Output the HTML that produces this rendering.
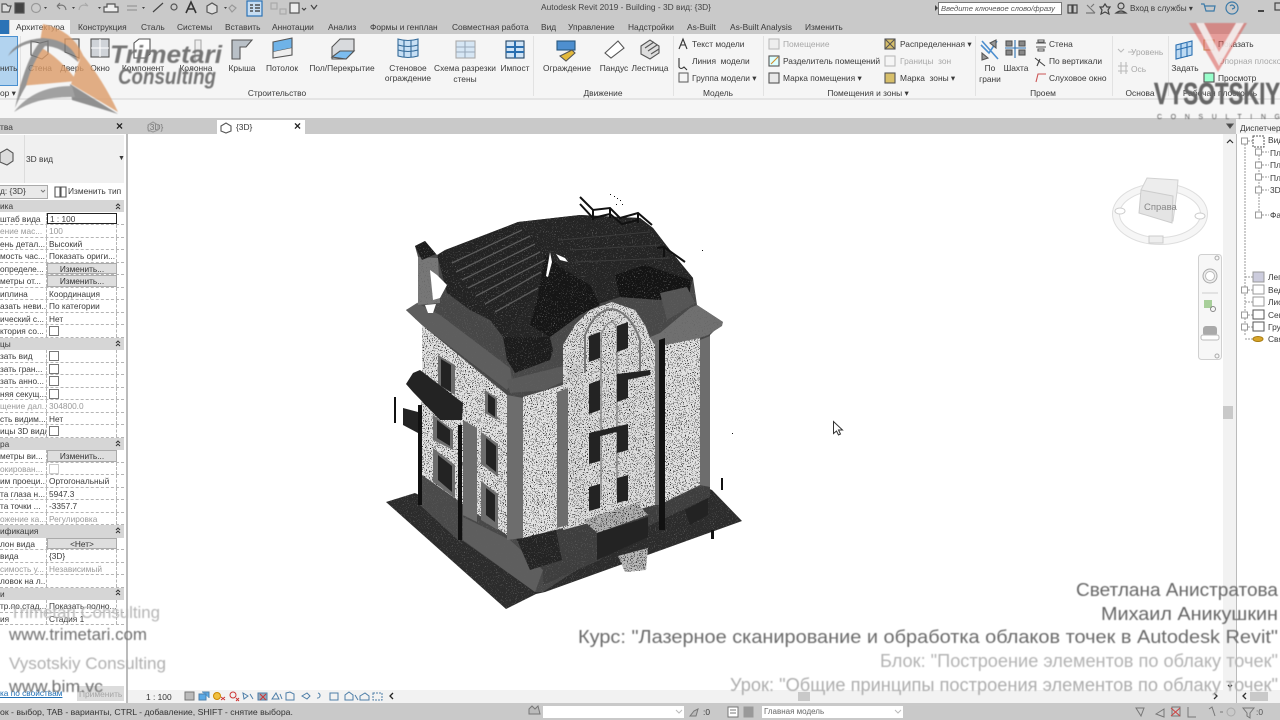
<!DOCTYPE html>
<html lang="ru"><head><meta charset="utf-8"><title>Autodesk Revit 2019</title>
<style>
html,body{margin:0;padding:0;width:1280px;height:720px;overflow:hidden;background:#fff}
body{font-family:"Liberation Sans","Noto Sans CJK SC",sans-serif;position:relative;color:#3a3a3a}
#ui{position:absolute;left:0;top:0;width:1280px;height:720px;overflow:hidden;filter:blur(.3px)}
.b{position:absolute}
.t{position:absolute;white-space:nowrap;font-size:8.4px;line-height:10px}
.c{transform:translateX(-50%)}
.g{color:#a8a8a8}
#props{position:absolute;left:0;top:212.5px;width:124px}
.r{height:12.5px;display:flex;font-size:8.3px;line-height:12px;box-sizing:border-box;border-bottom:1px dashed #b5b5b5;white-space:nowrap}
.r i{font-style:normal;width:46px;overflow:hidden;border-right:1px dashed #b5b5b5;flex:none}
.r u{text-decoration:none;padding-left:2px;width:70px;box-sizing:border-box;overflow:hidden;border-right:1px dashed #b5b5b5;flex:none}
.r.h{background:#d6d6d6;border:0}
.btn u{background:#dedede;border:1px solid #aaa;text-align:center;line-height:10px;color:#333;padding:0}
.cb{display:inline-block;width:8px;height:8px;border:1px solid #777;background:#fff;margin-top:1px}
.gr{color:#9a9a9a}
svg{position:absolute;left:0;top:0}
</style></head><body>
<div id="ui">
<div class="b" style="left:0;top:0;width:1280px;height:34px;background:#c9c9c9"></div>
<div class="b" style="left:0;top:34px;width:1280px;height:66px;background:#f5f5f5"></div>
<div class="b" style="left:0;top:98px;width:1280px;height:2px;background:#e4e4e4"></div>
<div class="b" style="left:0;top:100px;width:1280px;height:18px;background:#f6f6f6"></div>
<div class="b" style="left:0;top:118px;width:1280px;height:16px;background:#c9c9c9"></div>
<div class="b" style="left:0;top:20px;width:9px;height:14px;background:#2b73b6"></div>
<div class="b" style="left:10px;top:20px;width:60px;height:14px;background:#f5f5f5"></div>
<div class="t" style="left:541px;top:2px;color:#444">Autodesk Revit 2019 - Building - 3D вид: {3D}</div>
<div class="t" style="left:16px;top:22px">Архитектура</div><div class="t" style="left:78px;top:22px">Конструкция</div><div class="t" style="left:141px;top:22px">Сталь</div><div class="t" style="left:177px;top:22px">Системы</div><div class="t" style="left:225px;top:22px">Вставить</div><div class="t" style="left:272px;top:22px">Аннотации</div><div class="t" style="left:328px;top:22px">Анализ</div><div class="t" style="left:370px;top:22px">Формы и генплан</div><div class="t" style="left:452px;top:22px">Совместная работа</div><div class="t" style="left:541px;top:22px">Вид</div><div class="t" style="left:568px;top:22px">Управление</div><div class="t" style="left:628px;top:22px">Надстройки</div><div class="t" style="left:687px;top:22px">As-Built</div><div class="t" style="left:730px;top:22px">As-Built Analysis</div><div class="t" style="left:805px;top:22px">Изменить</div>

<div class="b" style="left:938px;top:2px;width:124px;height:13px;background:#fff;border:1px solid #777;box-sizing:border-box"></div>
<div class="t" style="left:941px;top:4px;font-size:7.6px;font-style:italic;color:#555">Введите ключевое слово/фразу</div>
<div class="t" style="left:1130px;top:4px;font-size:8.2px">Вход в службы ▾</div>

<div class="b" style="left:0;top:36px;width:18px;height:50px;background:#b2d3ef;border:1px solid #4a90d0;border-left:0;box-sizing:border-box"></div>
<div class="t" style="left:0;top:63px">нить</div><div class="t" style="left:0;top:88px">ор ▾</div>
<div class="t c" style="left:40px;top:63px">Стена</div><div class="t c" style="left:72px;top:63px">Дверь</div><div class="t c" style="left:100px;top:63px">Окно</div><div class="t c" style="left:143px;top:63px">Компонент</div><div class="t c" style="left:196px;top:63px">Колонна</div><div class="t c" style="left:242px;top:63px">Крыша</div><div class="t c" style="left:282px;top:63px">Потолок</div><div class="t c" style="left:342px;top:63px">Пол/Перекрытие</div><div class="t c" style="left:408px;top:63px">Стеновое</div><div class="t c" style="left:408px;top:73px">ограждение</div><div class="t c" style="left:465px;top:63px">Схема разрезки</div><div class="t c" style="left:465px;top:74px">стены</div><div class="t c" style="left:515px;top:63px">Импост</div><div class="t c" style="left:567px;top:63px">Ограждение</div><div class="t c" style="left:614px;top:63px">Пандус</div><div class="t c" style="left:650px;top:63px">Лестница</div>
<div class="t c" style="left:277px;top:88px">Строительство</div><div class="t c" style="left:603px;top:88px">Движение</div><div class="t c" style="left:718px;top:88px">Модель</div><div class="t c" style="left:868px;top:88px">Помещения и зоны ▾</div><div class="t c" style="left:1043px;top:88px">Проем</div><div class="t c" style="left:1140px;top:88px">Основа</div><div class="t c" style="left:1220px;top:88px">Рабочая плоскость</div>
<div class="t" style="left:692px;top:39px">Текст модели</div><div class="t" style="left:692px;top:56px">Линия&nbsp; модели</div><div class="t" style="left:692px;top:73px">Группа модели ▾</div>
<div class="t g" style="left:783px;top:39px">Помещение</div><div class="t" style="left:783px;top:56px">Разделитель помещений</div><div class="t" style="left:783px;top:73px">Марка помещения ▾</div>
<div class="t" style="left:900px;top:39px">Распределенная ▾</div><div class="t g" style="left:900px;top:56px">Границы&nbsp; зон</div><div class="t" style="left:900px;top:73px">Марка&nbsp; зоны ▾</div>
<div class="t c" style="left:990px;top:63px">По</div><div class="t c" style="left:990px;top:74px">грани</div><div class="t c" style="left:1016px;top:63px">Шахта</div>
<div class="t" style="left:1049px;top:39px">Стена</div><div class="t" style="left:1049px;top:56px">По вертикали</div><div class="t" style="left:1049px;top:73px">Слуховое окно</div>
<div class="t g" style="left:1131px;top:47px">Уровень</div><div class="t g" style="left:1131px;top:64px">Ось</div><div class="t c" style="left:1185px;top:63px">Задать</div>
<div class="t" style="left:1218px;top:39px">Показать</div><div class="t g" style="left:1218px;top:56px">Опорная плоскость</div><div class="t" style="left:1218px;top:73px">Просмотр</div>

<div class="b" style="left:128px;top:134px;width:1095px;height:556px;background:#fff"></div>
<div class="b" style="left:0;top:134px;width:127px;height:569px;background:#fff"></div>
<div class="b" style="left:126px;top:134px;width:2px;height:569px;background:#bbb"></div>
<div class="t" style="left:0;top:122px">тва</div><div class="t" style="left:116px;top:121px;font-size:12px;color:#222;font-weight:bold">×</div>
<div class="b" style="left:217px;top:120px;width:88px;height:14px;background:#fff"></div>
<div class="t" style="left:147px;top:122px;color:#777">{3D}</div><div class="t" style="left:236px;top:122px">{3D}</div><div class="t" style="left:294px;top:121px;font-size:12px;font-weight:bold;color:#222">×</div>
<div class="b" style="left:1236px;top:119px;width:44px;height:15px;background:#f5f5f5"></div>
<div class="t" style="left:1240px;top:123px;font-size:8.3px">Диспетчер</div>

<div class="b" style="left:0;top:135px;width:124px;height:48px;background:#f0f0f0"></div>
<div class="b" style="left:24px;top:135px;width:1px;height:48px;background:#dcdcdc"></div>
<div class="t" style="left:26px;top:154px">3D вид</div><div class="t" style="left:118px;top:154px;font-size:7px">▼</div>
<div class="b" style="left:0;top:185px;width:48px;height:14px;background:#e9e9e9;border:1px solid #aaa;border-left:0;box-sizing:border-box"></div>
<div class="t" style="left:0;top:186px">д: {3D}</div><div class="t" style="left:68px;top:186px">Изменить тип</div>

<div id="props">
<div class="r h" style="position:absolute;top:-12.5px;width:124px;height:12px;line-height:12px">ика</div>
<div class="r"><i>штаб вида</i><u style="border:1px solid #222;line-height:10px">1 : 100</u></div>
<div class="r"><i class="gr">ение мас...</i><u class="gr">100</u></div>
<div class="r"><i>ень детал...</i><u>Высокий</u></div>
<div class="r"><i>мость час...</i><u>Показать ориги...</u></div>
<div class="r btn"><i>определе...</i><u>Изменить...</u></div>
<div class="r btn"><i>метры от...</i><u>Изменить...</u></div>
<div class="r"><i>иплина</i><u>Координация</u></div>
<div class="r"><i>азать неви...</i><u>По категории</u></div>
<div class="r"><i>ический с...</i><u>Нет</u></div>
<div class="r"><i>ктория со...</i><u><span class="cb"></span></u></div>
<div class="r h">цы</div>
<div class="r"><i>зать вид</i><u><span class="cb"></span></u></div>
<div class="r"><i>зать гран...</i><u><span class="cb"></span></u></div>
<div class="r"><i>зать анно...</i><u><span class="cb"></span></u></div>
<div class="r"><i>няя секущ...</i><u><span class="cb"></span></u></div>
<div class="r"><i class="gr">щение дал...</i><u class="gr">304800.0</u></div>
<div class="r"><i>сть видим...</i><u>Нет</u></div>
<div class="r"><i>ицы 3D вида</i><u><span class="cb"></span></u></div>
<div class="r h">ра</div>
<div class="r btn"><i>метры ви...</i><u>Изменить...</u></div>
<div class="r"><i class="gr">окирован...</i><u><span class="cb" style="border-color:#ccc"></span></u></div>
<div class="r"><i>им проеци...</i><u>Ортогональный</u></div>
<div class="r"><i>та глаза н...</i><u>5947.3</u></div>
<div class="r"><i>та точки ...</i><u>-3357.7</u></div>
<div class="r"><i class="gr">ожение ка...</i><u class="gr">Регулировка</u></div>
<div class="r h">ификация</div>
<div class="r btn"><i>лон вида</i><u>&lt;Нет&gt;</u></div>
<div class="r"><i>вида</i><u>{3D}</u></div>
<div class="r"><i class="gr">симость у...</i><u class="gr">Независимый</u></div>
<div class="r"><i>ловок на л...</i><u></u></div>
<div class="r h">и</div>
<div class="r"><i>тр.по.стад...</i><u>Показать полно...</u></div>
<div class="r"><i>ия</i><u>Стадия 1</u></div>
</div>

<div class="t" style="left:0;top:688px;font-size:8.3px;color:#1f6fb5;text-decoration:underline">ка по свойствам</div>
<div class="b" style="left:77px;top:686px;width:47px;height:15px;background:#dcdcdc"></div><div class="t" style="left:79px;top:689px;color:#a5a5a5">Применить</div>

<div class="b" style="left:128px;top:690px;width:1095px;height:13px;background:#f2f2f2"></div>
<div class="t" style="left:146px;top:692px;color:#333">1 : 100</div>
<div class="b" style="left:798px;top:692px;width:12px;height:9px;background:#c9c9c9"></div>
<div class="b" style="left:1223px;top:134px;width:13px;height:569px;background:#f2f2f2"></div>
<div class="b" style="left:1223px;top:406px;width:10px;height:13px;background:#c9c9c9"></div>
<div class="b" style="left:1236px;top:134px;width:1px;height:569px;background:#bbb"></div>
<div class="b" style="left:1237px;top:690px;width:43px;height:13px;background:#f2f2f2"></div>
<div class="b" style="left:1250px;top:692px;width:18px;height:9px;background:#c9c9c9"></div>

<div class="b" style="left:0;top:703px;width:1280px;height:17px;background:#c9c9c9"></div>
<div class="t" style="left:0;top:707px;font-size:8.7px;color:#333">ок - выбор, TAB - варианты, CTRL - добавление, SHIFT - снятие выбора.</div>
<div class="b" style="left:543px;top:706px;width:141px;height:12px;background:#fff"></div>
<div class="b" style="left:762px;top:706px;width:141px;height:12px;background:#fff"></div>
<div class="t" style="left:764px;top:707px;font-size:8px;color:#666">Главная модель</div>
<div class="t" style="left:703px;top:707px">:0</div>
<div class="t" style="left:1256px;top:707px;color:#555">:0</div>

<div class="t" style="left:1268px;top:135px">Вид</div>
<div class="t" style="left:1270px;top:148px">Пл</div><div class="t" style="left:1270px;top:160px">Пл</div><div class="t" style="left:1270px;top:173px">Пл</div><div class="t" style="left:1270px;top:185px">3D</div><div class="t" style="left:1270px;top:210px">Фа</div>
<div class="t" style="left:1268px;top:272px">Лег</div><div class="t" style="left:1268px;top:285px">Вед</div><div class="t" style="left:1268px;top:297px">Лис</div><div class="t" style="left:1268px;top:310px">Сем</div><div class="t" style="left:1268px;top:322px">Гру</div><div class="t" style="left:1268px;top:334px">Свя</div>

<svg width="1280" height="720" viewBox="0 0 1280 720" fill="none">
<g stroke="#e2e2e2"><path d="M20.5 36V96M533.5 36V96M673.5 36V96M763.5 36V96M975.5 36V96M1112.5 36V96M1168.5 36V96"/></g>
<!-- section chevrons -->
<g stroke="#333"><path d="M116 206l2-2 2 2M116 209l2-2 2 2M116 343l2-2 2 2M116 346l2-2 2 2M116 443l2-2 2 2M116 446l2-2 2 2M116 530l2-2 2 2M116 533l2-2 2 2M116 592l2-2 2 2M116 595l2-2 2 2"/><path d="M41 190l2 2 2-2" stroke="#777"/></g>
<!-- QAT icons -->
<g stroke="#555" stroke-width="1.2">
<path d="M2 4h4l2 2h3l-2 6H2z" fill="#ddd"/><rect x="15" y="3" width="9" height="10" fill="#444"/><circle cx="36" cy="8" r="4.5" stroke="#999" fill="#ccc"/>
<path d="M57 6q8-3 9 4M57 6l3-3M57 6l3 3" stroke="#777"/><path d="M88 6q-8-3-9 4M88 6l-3-3" stroke="#aaa"/>
<path d="M107 4h8v3h3v5h-14v-5h3z" fill="#eee"/><path d="M127 6h10M127 10h10" stroke="#999"/><path d="M153 12l10-9" stroke="#444"/><circle cx="174" cy="7" r="3"/>
<path d="M186 13l5-11 5 11M188 9h6" stroke="#333" stroke-width="1.6"/><path d="M207 6l5-3 5 3v6l-5 2-5-2z" fill="#ddd"/><path d="M232 5l4 3-4 4-3-4z" stroke="#999"/>
<rect x="247" y="1" width="15" height="15" fill="#c7ddf2" stroke="#2b73b6"/><path d="M250 5h3M250 8h3M250 11h3M255 5h5M255 8h5M255 11h5" stroke="#333"/>
<rect x="271" y="3" width="6" height="6" stroke="#aaa"/><rect x="280" y="9" width="6" height="5" stroke="#aaa"/><rect x="290" y="3" width="9" height="10" fill="#eee"/><path d="M302 8l2 2 2-2M311 5l3 4 3-4" stroke="#444"/>
</g>
<g fill="#444"><path d="M44 7h3l-1.500 2zM72 7h3l-1.500 2zM98 7h3l-1.500 2zM142 7h3l-1.500 2zM224 7h3l-1.500 2z"/></g>
<g stroke="#444" stroke-width="1.2"><path d="M1068 5h4v8h-4zM1073 5h4v8h-4z"/><path d="M1087 5l8 8M1094 4l-3 3M1086 13h9" stroke="#777"/><path d="M1105 4l2 3h3l-2 3 1 4-4-2-4 2 1-4-2-3h3z"/><circle cx="1121" cy="6" r="3"/><path d="M1116 13q5-4 10 0z"/><path d="M1201 4h3l2 7h8l1-5h-10" stroke="#3b7aa8"/><circle cx="1232" cy="8" r="6" stroke="#3b7aa8"/><path d="M1230 6q2-2 4 0t-2 3" stroke="#3b7aa8"/><path d="M1258 11h6" stroke-width="2"/><rect x="1275" y="3" width="6" height="7"/></g>
<path d="M935 5l3 3-3 3z" fill="#444"/>
<!-- ribbon icons big -->
<g stroke="#555" stroke-width="1.1">
<path d="M31 41l9 2 8-2v13l-6 5-11-4z" fill="#f0f0f0"/><path d="M65 39h14v19l-9-4-5-2z" fill="#e4e4e4" stroke="#444"/>
<rect x="91" y="39" width="18" height="18" fill="#cfd3d8"/><path d="M100 39v18M91 48h18" stroke="#fff"/>
<path d="M134 43l5-4h11v15l-5 4h-11z" fill="#fff"/><path d="M195 40h6v20h-6z" fill="#eee" stroke="#aaa"/>
<path d="M232 40h20l-6 7h-6v12h-8z" fill="#b9c0c7"/><path d="M273 42l19-4v10l-19 4z" fill="#6fb3e8"/><path d="M273 52v6l19-3v-7" fill="#eee"/>
<path d="M332 47l8-8h14v12l-8 8h-14z" fill="#d8dadd"/><path d="M332 57l8-6h14l-8 8z" fill="#7cbdf0"/>
<path d="M398 39q10 3 20 0v17q-10 3-20 0z" fill="#c7dff4" stroke="#336a99"/><path d="M398 45q10 3 20 0M398 50q10 3 20 0M404 40v17M411 40v17" stroke="#336a99"/>
<rect x="456" y="41" width="19" height="17" fill="#d6e6f4" stroke="#aaa"/><path d="M456 47h19M456 52h19M465 41v17" stroke="#9ab"/>
<rect x="506" y="41" width="18" height="17" fill="#cfe4f7" stroke="#246"/><path d="M506 47h18M506 52h18M515 41v17" stroke="#2a6fb0" stroke-width="2"/>
<rect x="557" y="41" width="18" height="9" fill="#4e8fcf" stroke="#27577f"/><path d="M560 56l12-6 3 3-9 8z" fill="#e3b93b"/>
<path d="M605 53l13-12 6 7-13 10z" fill="#fff" stroke="#555"/><path d="M641 46l9-6 9 6v7l-9 6-9-5z" fill="#ddd"/><path d="M645 48l9-6M648 51l9-6M651 54l8-5"/>
<path d="M679 49l4-10 4 10M681 45h4" stroke="#333"/><path d="M679 58v9q2 3 5 0l3 3" stroke="#333"/><rect x="679" y="73" width="9" height="9" stroke="#666"/>
<rect x="769" y="39" width="10" height="10" stroke="#bbb" fill="#eee"/><rect x="769" y="56" width="10" height="10" fill="#dff"/><path d="M771 64l7-7" stroke="#d28d2a"/><rect x="769" y="73" width="10" height="10" fill="#e8e8e8"/>
<rect x="885" y="39" width="10" height="10" fill="#d7bf6a"/><path d="M885 39l10 10M895 39l-10 10"/><rect x="885" y="56" width="10" height="10" stroke="#bbb"/><rect x="885" y="73" width="10" height="10" fill="#d7bf6a"/>
<path d="M981 45l8 8 8-12M982 41l16 18" stroke="#4d8fcf" stroke-width="1.6"/><path d="M990 43l6-3v8z M982 53l6 5-6 2z" fill="#999"/>
<rect x="1006" y="41" width="6" height="5" fill="#888"/><rect x="1006" y="50" width="6" height="5" fill="#888"/><rect x="1019" y="41" width="6" height="5" fill="#888"/><rect x="1019" y="50" width="6" height="5" fill="#888"/><path d="M1015 40v18M1005 48h21" stroke="#2a6fb0"/>
<path d="M1036 43h10M1036 47h10M1038 40h6v2h-6zM1038 49h6v2h-6z"/><path d="M1035 58l10 8M1037 66l3-7" stroke="#444"/><path d="M1036 82l2-8h8" stroke="#c55"/>
<path d="M1118 49l3 3 3-3M1128 52h5" stroke="#bbb"/><path d="M1118 66h10M1118 71h10M1121 62v12M1126 62v12" stroke="#bbb"/>
<path d="M1176 45l16-4v14l-16 4z" fill="#bcd9f2" stroke="#2a6fb0"/><path d="M1181 44v14M1187 43v14M1176 50l16-4" stroke="#2a6fb0"/>
<rect x="1204" y="40" width="10" height="10" stroke="#c79a5b"/><rect x="1204" y="73" width="10" height="9" fill="#9fc"/>
<path d="M148 126l5-3 5 3v5l-5 2-5-2z" stroke="#999" transform="translate(0,-1)"/><path d="M221 126l5-3 5 3v5l-5 2-5-2z"/>
<path d="M0 153l7-4 6 4v8l-6 4-7-3z" fill="#ddd"/><path d="M55 187h5v10h-5zM61 187h5v10h-5z" stroke="#555"/>
<path d="M1227 124h6l-3 4z" fill="#444"/>
</g>
<!-- bottom icons -->
<g stroke="#4d7ea8" stroke-width="1">
<rect x="185" y="692" width="9" height="8" fill="#bbb" stroke="#777"/><path d="M199 694h7v6h-7zM202 692h7v6" fill="#5aa9e6"/><circle cx="217" cy="696" r="3.500" fill="#f0c040" stroke="#c80"/><path d="M221 697l4 3M225 697l-4 3" stroke="#c33"/>
<circle cx="233" cy="695" r="3" stroke="#c33"/><path d="M236 698l3 3M239 698l-3 3" stroke="#c33"/><path d="M243 693l5 3-4 3zM250 694l3 5"/><rect x="258" y="693" width="9" height="7" fill="#9ab"/><path d="M260 694l6 6M266 694l-6 6" stroke="#c33"/>
<path d="M272 699l4-6 3 6zM280 694l2 5"/><path d="M286 693l4-1 4 2v6h-8z"/><path d="M302 696l5-3 3 3-3 3z"/><path d="M318 693a2 2 0 1 1-1 5"/><rect x="330" y="693" width="8" height="7"/><path d="M345 700v-5l4-3 4 3v5zM355 695l3 5"/><path d="M360 696l5-3 4 3v4h-9z"/><path d="M373 693h9v7h-9z" stroke-dasharray="2 1"/><path d="M393 693l-3 3 3 3" stroke="#222" stroke-width="1.3"/>
</g>
<g stroke="#777" fill="none"><path d="M529 714v-5l3-3 3 3 3-3 2 8h-11z" fill="#bbb"/><path d="M690 716l4-5 4-2-2 7h-6z" fill="#bbb"/><rect x="728" y="707" width="10" height="10" fill="#fff"/><path d="M730 710h6M730 713h6"/><rect x="744" y="707" width="9" height="10" fill="#999" stroke="#999"/></g>
<g stroke="#777"><path d="M676 710l3 3 3-3M895 710l3 3 3-3" stroke="#bbb"/><path d="M1136 708h8l-3 8zM1156 714l8-5v8zM1172 707h8v9h-8zM1188 707v10h8"/><path d="M1171 708l9 8M1180 708l-9 8" stroke="#c44"/><path d="M1209 709l3-2 3 9M1220 712h3"/><circle cx="1231" cy="712" r="4" stroke="#aaa"/><path d="M1243 708h11l-4 5v5l-3-2v-3z"/></g>
<g stroke="#333"><path d="M1214 693l3 3-3 3M1246 693l-3 3 3 3" stroke-width="1.3"/><path d="M1228 685l2 2 2-2" stroke-width="1.3"/><path d="M1227 143l3-3 3 3" stroke-width="1.2"/></g>
<!-- tree -->
<g stroke="#999"><path d="M1245 141v195M1259 152v60M1245 141h8M1259 152h10M1259 165h10M1259 177h10M1259 190h10M1259 215h10M1245 277h8M1245 290h8M1245 302h8M1245 315h8M1245 327h8M1245 339h8" stroke-dasharray="2 1"/><g fill="#fff"><rect x="1241.500" y="138" width="6" height="6"/><rect x="1255.500" y="149" width="6" height="6"/><rect x="1255.500" y="162" width="6" height="6"/><rect x="1255.500" y="174" width="6" height="6"/><rect x="1255.500" y="187" width="6" height="6"/><rect x="1255.500" y="212" width="6" height="6"/><rect x="1241.500" y="287" width="6" height="6"/><rect x="1241.500" y="312" width="6" height="6"/><rect x="1241.500" y="324" width="6" height="6"/></g><rect x="1253" y="136" width="11" height="11" stroke="#555" stroke-dasharray="2 1"/><rect x="1253" y="272" width="11" height="10" fill="#ccd"/><rect x="1253" y="285" width="11" height="9"/><rect x="1253" y="297" width="11" height="9"/><rect x="1253" y="310" width="11" height="9" stroke="#555"/><rect x="1253" y="322" width="11" height="9" stroke="#555"/><ellipse cx="1258" cy="339" rx="5" ry="2.500" fill="#d8a52a" stroke="#a87b10"/></g>
<!-- view cube -->
<ellipse cx="1160" cy="214" rx="44" ry="27" stroke="#dedede" stroke-width="8"/><ellipse cx="1160" cy="214" rx="44" ry="27" stroke="#f6f6f6" stroke-width="6"/>
<path d="M1141 190l6-12 31 2-1 12-4 29-32-10z" fill="#ededed" stroke="#d2d2d2"/><path d="M1141 190l32 6-1 27-33-10z" fill="#e4e4e4" stroke="#ccc"/>
<text x="1144" y="210" font-size="9.500" fill="#888" font-family="Liberation Sans">Справа</text>
<ellipse cx="1120" cy="211" rx="5" ry="3" fill="#fff" stroke="#ccc"/><ellipse cx="1200" cy="216" rx="5" ry="3" fill="#fff" stroke="#ccc"/><rect x="1149" y="236" width="14" height="7" fill="#eee" stroke="#ccc"/>
<!-- nav bar -->
<rect x="1198.500" y="254.500" width="23" height="105" rx="3" fill="#f7f7f7" stroke="#d0d0d0"/>
<circle cx="1210" cy="276" r="7" fill="#eee" stroke="#aaa"/><circle cx="1210" cy="276" r="4.500" stroke="#bbb" fill="#fff"/><rect x="1204" y="300" width="8" height="8" fill="#a8cf9a"/><circle cx="1213" cy="309" r="2.500" stroke="#888"/><rect x="1203" y="326" width="14" height="10" rx="3" fill="#aaa"/><rect x="1201" y="335" width="18" height="5" rx="2" fill="#fff" stroke="#bbb"/>
<path d="M1202 293h16" stroke="#ccc"/><circle cx="1217" cy="258" r="2" stroke="#aaa"/><circle cx="1217" cy="356" r="2" stroke="#aaa"/>

<defs>
<filter id="sp" x="0" y="0" width="100%" height="100%" color-interpolation-filters="sRGB"><feTurbulence type="fractalNoise" baseFrequency="1.05" numOctaves="1" seed="4" result="n"/><feColorMatrix in="n" type="matrix" values="0 0 0 0 0 0 0 0 0 0 0 0 0 0 0 14 0 0 0 -8.300" result="d"/><feComposite in="d" in2="SourceAlpha" operator="in" result="dots"/><feMerge><feMergeNode in="SourceGraphic"/><feMergeNode in="dots"/></feMerge></filter>
<filter id="sl" x="0" y="0" width="100%" height="100%" color-interpolation-filters="sRGB"><feTurbulence type="fractalNoise" baseFrequency="0.9" numOctaves="1" seed="9" result="n"/><feColorMatrix in="n" type="matrix" values="0 0 0 0 .38 0 0 0 0 .38 0 0 0 0 .38 10 0 0 0 -6.200" result="d"/><feComposite in="d" in2="SourceAlpha" operator="in" result="dots"/><feMerge><feMergeNode in="SourceGraphic"/><feMergeNode in="dots"/></feMerge></filter>
</defs>
<!-- BUILDING dark speckled -->
<g filter="url(#sl)">
<polygon points="386,502 415,493 430,500 510,560 700,485 712,490 742,521 545,592 536,594 506,609" fill="#2c2c2c"/>
<!-- silhouette underlay -->
<polygon points="406,310 418,304 418,257 415,246 425,241 437,255 518,222 580,215 640,218 653,228 670,250 693,278 697,305 723,322 710,335 710,490 640,528 543,592 535,592 463,541 420,505 418,430 422,400 422,325" fill="#484848"/>
<polygon points="420,470 460,505 460,542 420,505" fill="#4a4a4a"/>
<polygon points="463,517 510,540 543,570 535,592 463,540" fill="#5e5e5e"/>
<polygon points="512,535 560,525 660,495 710,485 710,497 640,530 600,560 543,585 543,570" fill="#3e3e3e"/>
<polygon points="515,535 555,525 562,560 530,570" fill="#242424"/>
<polygon points="437,255 445,250 518,222 552,252 530,305 503,337 490,320 470,310 447,293" fill="#232323"/>
<polygon points="518,222 580,215 640,218 653,228 670,250 693,278 690,290 660,300 620,297 595,305 580,315 550,337 503,337 530,305 552,252" fill="#252525"/>
<polygon points="545,255 565,270 590,285 600,305 580,315 550,337 530,325 538,295" fill="#161616"/>
<polygon points="615,275 645,265 690,280 690,292 660,300 620,297" fill="#141414"/>
<polygon points="660,293 687,287 695,303 667,320" fill="#555"/>
<polygon points="503,337 550,337 553,350 550,360 515,373 507,360" fill="#1c1c1c"/>
<polygon points="406,310 417,303 440,315 510,368 512,380 507,390 422,325" fill="#5e5e5e"/>
<polygon points="417,303 440,298 478,320 503,337 507,362 445,315" fill="#474747"/>
<polygon points="507,380 580,362 583,372 545,390 510,393" fill="#5a5a5a"/>
<polygon points="643,340 660,333 690,308 697,305 723,322 722,326 708,335 664,350" fill="#707070"/>
<polygon points="418,257 438,258 440,303 418,305" fill="#777"/>
<polygon points="415,246 425,241 436,254 422,260" fill="#1c1c1c"/>
</g>
<!-- light walls -->
<g filter="url(#sp)">
<polygon points="422,325 507,395 507,535 422,475" fill="#e0e0e0"/>
<polygon points="523,397 563,385 563,528 523,538" fill="#e2e2e2"/>
<polygon points="563,345 575,325 590,310 612,302 635,310 645,325 650,338 655,345 655,505 563,530" fill="#dcdcdc"/>
<polygon points="665,345 700,338 700,485 665,502" fill="#e0e0e0"/>
<polygon points="573,362 580,365 583,372 563,385" fill="#cfcfcf"/>
<polygon points="583,520 637,503 648,515 597,533" fill="#b0b0b0"/>
<polygon points="618,556 648,548 646,570 625,572" fill="#b8b8b8"/>
</g>
<!-- arch bands -->
<g stroke="#777" stroke-width="2"><path d="M585 372V335Q595 310 612 309Q630 312 640 340V372"/><path d="M601 500V335Q606 322 612 322Q618 325 617 335V495" stroke="#8a8a8a" stroke-width="1.500"/></g>
<!-- details on walls -->
<g fill="#6d6d6d">
<polygon points="557,392 568,388 568,525 557,528"/><polygon points="507,395 523,398 523,538 507,540"/><polygon points="655,345 665,342 665,505 655,505"/><polygon points="700,340 710,336 710,487 700,485"/><polygon points="463,420 477,428 477,522 463,515"/>
<polygon points="438,355 455,365 455,395 438,385"/><polygon points="433,415 453,430 453,450 433,440"/><polygon points="433,448 455,465 455,498 433,482"/><polygon points="481,432 498,444 498,477 481,464"/><polygon points="481,481 498,494 498,530 481,520"/><polygon points="485,390 497,398 497,420 485,413"/>
</g>
<g fill="#232323">
<polygon points="441,359 451,365 451,392 441,386"/><polygon points="437,420 450,430 450,446 437,438"/><polygon points="438,455 452,466 452,492 438,480"/><polygon points="486,438 496,446 496,472 486,464"/><polygon points="486,488 495,495 495,522 486,515"/><polygon points="488,394 495,399 495,417 488,412"/>
<polygon points="589,336 600,332 600,358 589,362"/><polygon points="617,326 628,322 628,348 617,352"/><polygon points="589,384 600,380 600,410 589,414"/><polygon points="617,378 628,374 628,398 617,402"/><polygon points="589,436 600,432 600,461 589,464"/><polygon points="617,428 628,424 628,450 617,453"/><polygon points="589,487 600,484 600,508 589,511"/><polygon points="617,478 628,475 628,500 617,503"/>
<polygon points="589,433 628,424 628,429 589,439"/><polygon points="617,374 650,370 650,375 617,382"/>
<polygon points="413,373 420,370 463,403 462,420 440,420 413,392 406,384"/><polygon points="403,408 418,412 418,433 403,425"/>
<polygon points="659,340 665,338 665,530 659,530" fill="#111"/><rect x="418" y="405" width="4" height="100" fill="#111"/><rect x="458" y="425" width="4" height="115" fill="#111"/>
<polygon points="597,533 648,517 648,537 597,560"/><polygon points="685,510 708,498 708,515 690,525"/>
</g>
<!-- roof strips -->
<g stroke="#5c5c5c" stroke-width="1.300">
<path d="M452 263L522 230M456 272L530 236M462 280L535 244M468 288L540 252M476 296L545 260M485 304L541 272M495 312L538 288"/>
<path d="M560 240L650 232M570 250L660 245M575 262L670 258" stroke="#3c3c3c" stroke-width="1"/></g>
<!-- railings -->
<g stroke="#111" stroke-width="2"><path d="M580 197L593 210L610 208L620 218L638 213L652 225"/><path d="M580 204L593 218L610 214L622 224L638 220"/><path d="M657 248L664 247L685 262" /><path d="M593 210v10M610 208v10M638 213v10M664 247v10"/></g>
<!-- whites -->
<g fill="#fff"><polygon points="430,270 437,275 447,285 440,298 433,300"/><polygon points="425,305 436,304 433,313 428,313"/><polygon points="550,252 552,262 548,277 546,276"/><polygon points="556,254 565,258 568,262 560,260"/></g>
<!-- stray points -->
<g fill="#111"><rect x="394" y="397" width="2" height="26"/><rect x="721" y="478" width="2" height="12"/><rect x="711" y="530" width="3" height="9"/><rect x="702" y="250" width="1" height="1"/><rect x="732" y="433" width="1" height="1"/><rect x="610" y="194" width="1" height="1"/><rect x="614" y="196" width="1" height="1"/><rect x="617" y="198" width="1" height="1"/><rect x="620" y="200" width="1" height="1"/><rect x="622" y="204" width="1" height="1"/><rect x="616" y="204" width="1" height="1"/></g>
<path d="M833.500 421.500v12l3-2.500 2 4 2-1-2-4h4z" fill="#fff" stroke="#333"/>
</svg>
</div>

<svg width="1280" height="720" viewBox="0 0 1280 720" fill="none" style="filter:blur(.4px)">
<g opacity=".8">
<path d="M43 24Q72 30 83 55L78 62Q62 42 40 42Z" fill="#dd9c68"/>
<path d="M40 47Q60 58 77 81L20 86Q28 62 40 47Z" fill="#dd9c68"/>
<path d="M82 54Q103 80 118 112L71 84Z" fill="#dd9c68"/>
<path d="M15 108Q25 60 40 42Q22 42 8 56Q16 40 43 38Q72 40 78 62Q60 46 45 46Q32 62 26 86Q20 96 15 108Z" fill="#7e7e7e"/>
<path d="M70 84L118 114Q92 106 72 100Z" fill="#777"/>
<path d="M14 112Q34 86 72 86L75 97Q38 96 14 112Z" fill="#8c8c8c"/>
</g>
<g font-family="Liberation Sans" font-style="italic" font-weight="bold" fill="#757575">
<text x="110" y="63" font-size="25" textLength="112" lengthAdjust="spacingAndGlyphs">Trimetari</text>
<text x="118" y="84" font-size="22" textLength="98" lengthAdjust="spacingAndGlyphs">Consulting</text></g>
<path d="M1189 23H1247L1218 72Z" fill="#d9534f" opacity=".55"/><path d="M1204 23L1219 52L1236 23L1244 23L1219 66L1196 23Z" fill="#f4f4f4" opacity=".85"/>
<text x="1154" y="104" font-size="31" textLength="126" lengthAdjust="spacingAndGlyphs" font-family="Liberation Sans" font-weight="bold" fill="#666" stroke="#666" stroke-width=".5">VYSOTSKIY</text>
<text x="1157" y="119" font-size="7" fill="#555" font-family="Liberation Sans" textLength="123">CONSULTING</text>
<g font-family="Liberation Sans" font-size="18">
<text x="1076" y="596" fill="#666" textLength="202" lengthAdjust="spacingAndGlyphs">Светлана Анистратова</text>
<text x="1101" y="620" fill="#666" textLength="177" lengthAdjust="spacingAndGlyphs">Михаил Аникушкин</text>
<text x="578" y="643" fill="#6a6a6a" textLength="700" lengthAdjust="spacingAndGlyphs">Курс: "Лазерное сканирование и обработка облаков точек в Autodesk Revit"</text>
<text x="880" y="667" fill="#b3b3b3" textLength="398" lengthAdjust="spacingAndGlyphs">Блок: "Построение элементов по облаку точек"</text>
<text x="730" y="691" fill="#adadad" textLength="548" lengthAdjust="spacingAndGlyphs">Урок: "Общие принципы построения элементов по облаку точек"</text>
<g font-size="16.500">
<text x="10" y="618" fill="#b5b5b5" textLength="150" lengthAdjust="spacingAndGlyphs">Trimetari Consulting</text>
<text x="9" y="640" fill="#707070" textLength="138" lengthAdjust="spacingAndGlyphs">www.trimetari.com</text>
<text x="9" y="669" fill="#b0b0b0" textLength="157" lengthAdjust="spacingAndGlyphs">Vysotskiy Consulting</text>
<text x="9" y="692" fill="#707070" textLength="94" lengthAdjust="spacingAndGlyphs">www.bim.vc</text>
</g></g>
</svg>
</body></html>
